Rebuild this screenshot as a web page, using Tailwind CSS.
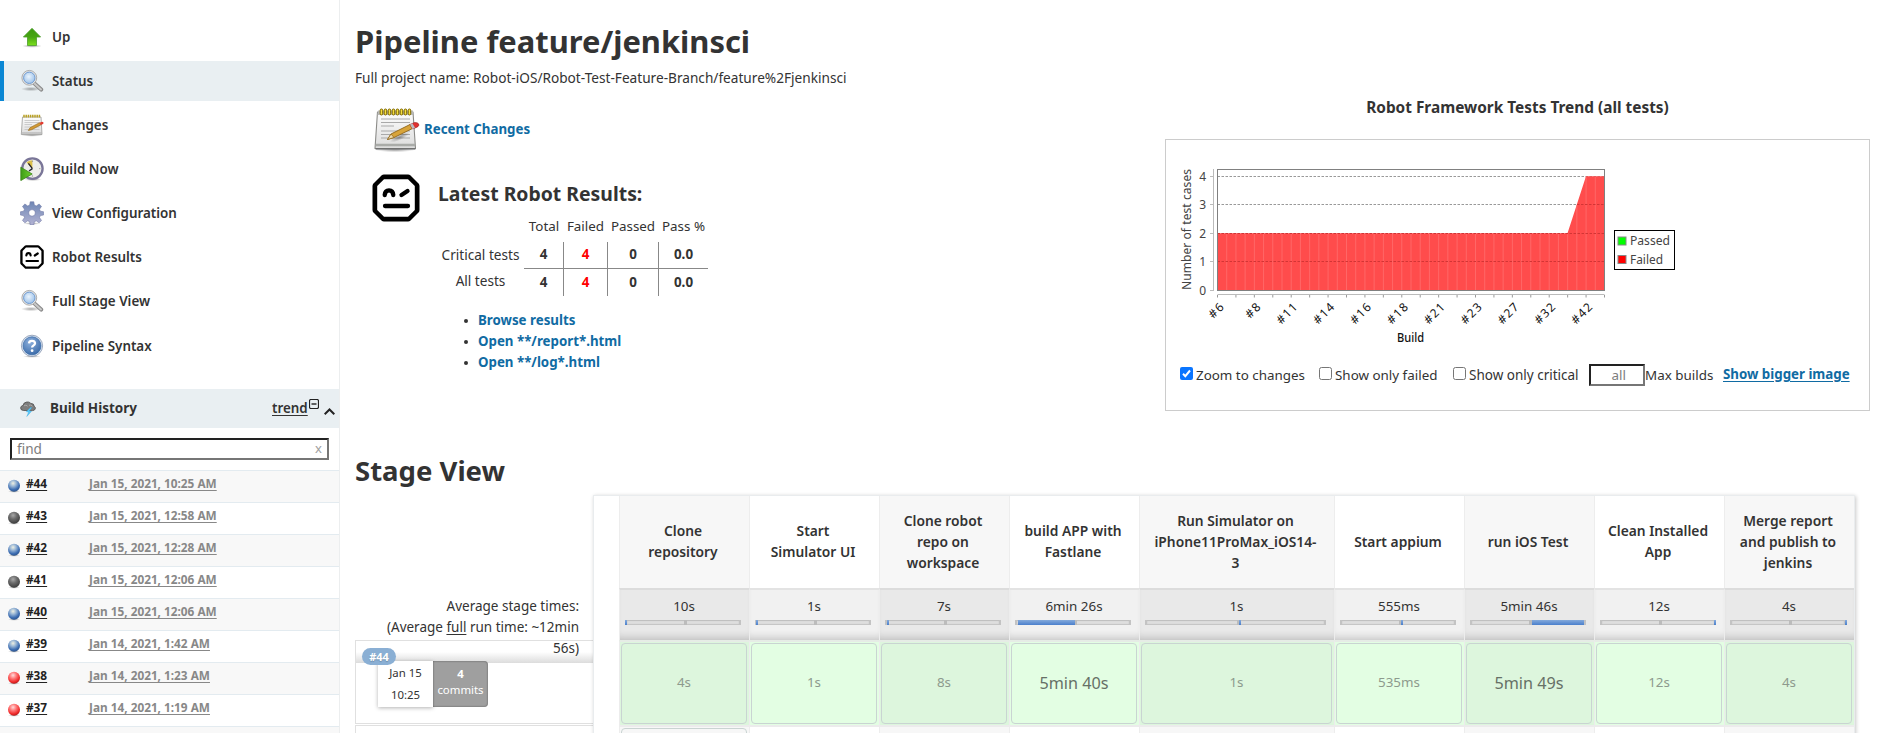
<!DOCTYPE html>
<html lang="en">
<head>
<meta charset="utf-8">
<title>Pipeline feature/jenkinsci</title>
<script src="https://cdn.jsdelivr.net/npm/@tailwindcss/browser@4"></script>
</head>
<body class="bg-white">
<svg class="absolute size-0">
  <defs>
    <linearGradient id="gUp" x1="0" y1="0" x2="0" y2="1"><stop offset="0" stop-color="#3c9a10"/><stop offset=".5" stop-color="#47a512"/><stop offset="1" stop-color="#7be01c"/></linearGradient>
    <linearGradient id="gPaper" x1="0" y1="0" x2="0" y2="1"><stop offset="0" stop-color="#fdfdfd"/><stop offset="1" stop-color="#dcdcdc"/></linearGradient>
    <radialGradient id="gLens" cx=".45" cy=".4" r=".6"><stop offset="0" stop-color="#eaf4fd"/><stop offset="1" stop-color="#9fc3ea"/></radialGradient>
    <linearGradient id="gPlay" x1="0" y1="0" x2="1" y2="0"><stop offset="0" stop-color="#3f9d18"/><stop offset="1" stop-color="#6fd02c"/></linearGradient>
    <linearGradient id="gGear" x1="0" y1="0" x2="0" y2="1"><stop offset="0" stop-color="#6f87b5"/><stop offset="1" stop-color="#b3b3d3"/></linearGradient>
    <radialGradient id="gHelp" cx=".4" cy=".3" r=".8"><stop offset="0" stop-color="#8db0dd"/><stop offset="1" stop-color="#3465a4"/></radialGradient>
    <radialGradient id="gBlue" cx=".42" cy=".3" r=".7"><stop offset="0" stop-color="#eef0e2"/><stop offset=".35" stop-color="#9cb8d6"/><stop offset=".75" stop-color="#3f6fb3"/><stop offset="1" stop-color="#2c5590"/></radialGradient>
    <radialGradient id="gGrey" cx=".42" cy=".3" r=".7"><stop offset="0" stop-color="#a8a8a8"/><stop offset=".45" stop-color="#6c6c6c"/><stop offset="1" stop-color="#3c3c3c"/></radialGradient>
    <radialGradient id="gRed" cx=".42" cy=".3" r=".7"><stop offset="0" stop-color="#ffdcdc"/><stop offset=".4" stop-color="#ff7878"/><stop offset=".8" stop-color="#ef2929"/><stop offset="1" stop-color="#b81c1c"/></radialGradient>
    <radialGradient id="gShade"><stop offset="0" stop-color="#000" stop-opacity=".35"/><stop offset="1" stop-color="#000" stop-opacity="0"/></radialGradient>
    <symbol id="i-up" viewBox="0 0 24 24"><ellipse cx="12" cy="21" rx="10" ry="1.8" fill="url(#gShade)"/><path d="M12 3.3 20.6 12H16.5V20.5H7.5V12H3.4Z" fill="url(#gUp)" stroke="#4d9c2c" stroke-width=".8" stroke-linejoin="round"/></symbol>
    <symbol id="i-search" viewBox="0 0 24 24"><ellipse cx="11" cy="20" rx="10" ry="2.2" fill="url(#gShade)"/><path d="M14.2 14.2 21.2 20.6" stroke="#8b8b8b" stroke-width="4" stroke-linecap="round"/><path d="M14.2 14.2 21 20.4" stroke="#c9c9c9" stroke-width="2" stroke-linecap="round"/><circle cx="9.3" cy="8.8" r="7.4" fill="#e6e6e6" stroke="#a6a6a6" stroke-width=".9"/><circle cx="9.3" cy="8.8" r="5.7" fill="url(#gLens)" stroke="#6f9bd1" stroke-width="1"/></symbol>
    <symbol id="i-note" viewBox="0 0 48 48"><ellipse cx="23" cy="45" rx="20" ry="2.2" fill="url(#gShade)"/><path d="M5.5 7H41L43.5 43.5H3Z" fill="url(#gPaper)" stroke="#8b8b88" stroke-width="1.1" stroke-linejoin="round"/><path d="M6 5.5H41V10H5.6Z" fill="#b9b9b6"/><path d="M4 40H43" stroke="#a9aba8" stroke-width="2.6"/><path d="M3.6 44H43.4" stroke="#55575a" stroke-width="1"/><path d="M9 14H38M9 17.5H38M9 21H22M9 26H38M9 29.5H38M9 33H38" stroke="#a9a9a9" stroke-width="1"/><g fill="#f4dd3c" stroke="#7b6500" stroke-width="1"><rect x="8.2" y="4" width="2.5" height="6" rx="1.2"/><rect x="12.2" y="4" width="2.5" height="6" rx="1.2"/><rect x="16.2" y="4" width="2.5" height="6" rx="1.2"/><rect x="20.2" y="4" width="2.5" height="6" rx="1.2"/><rect x="24.2" y="4" width="2.5" height="6" rx="1.2"/><rect x="28.2" y="4" width="2.5" height="6" rx="1.2"/><rect x="32.2" y="4" width="2.5" height="6" rx="1.2"/><rect x="36.2" y="4" width="2.5" height="6" rx="1.2"/></g><ellipse cx="28" cy="32" rx="11" ry="3" fill="url(#gShade)" transform="rotate(-25 28 32)"/><path d="M15.500 34.500 19 29 38 19.500 40.500 23.500 22 32.500Z" fill="#d8a43a" stroke="#8f6418" stroke-width=".9" stroke-linejoin="round"/><path d="M15.500 34.500 19 29 22 32.500Z" fill="#ecd9ac" stroke="#8f6418" stroke-width=".7"/><path d="M38 19.500 42.500 17.500Q46.500 17 47 20 46.500 21.500 45 22.200L40.500 24Z" fill="#e03030" stroke="#9a2020" stroke-width=".6"/><path d="M38 19.500 40.500 18.400 43 22.800 40.500 24Z" fill="#b9bbc0"/></symbol>
    <symbol id="i-notes" viewBox="0 0 24 24"><ellipse cx="12" cy="22.3" rx="11" ry="1.4" fill="url(#gShade)"/><path d="M2.5 4H21L22 21.5H1.3Z" fill="url(#gPaper)" stroke="#9a9a98" stroke-width=".8" stroke-linejoin="round"/><path d="M1.5 20H22" stroke="#b4b4b4" stroke-width="1.2"/><path d="M4.5 7.5H19.5M4.5 9.5H19.5M4.5 11.5H12M4.5 14H19.5M4.5 16.5H19.5" stroke="#c2c2c2" stroke-width=".8"/><path d="M4 1.8V4.6M6.2 1.8V4.6M8.4 1.8V4.6M10.6 1.8V4.6M12.8 1.8V4.6M15 1.8V4.6M17.2 1.8V4.6M19.4 1.8V4.6" stroke="#b9a021" stroke-width="1.5"/><path d="M8.3 17.5 10 14.7 19.5 9.7 21 11.8 11.7 16.7Z" fill="#d39a35" stroke="#8f6418" stroke-width=".6"/><path d="M19.5 9.7 22 8.8Q24 9 23.4 10.8L21 12Z" fill="#e23a30"/></symbol>
    <symbol id="i-clock" viewBox="0 0 24 24"><ellipse cx="13" cy="22.6" rx="9" ry="1.4" fill="url(#gShade)"/><circle cx="12.4" cy="11.6" r="10.2" fill="#ededea" stroke="#7a7698" stroke-width="2.3"/><path d="M12.4 11.6 6.5 5.5Q9 3.2 12.4 3.2Z" fill="#dcc04a"/><path d="M12.4 11.6 8.4 6.3M12.4 11.6 9 14" stroke="#22222c" stroke-width="1.3"/><circle cx="12.4" cy="4.2" r=".7" fill="#999"/><circle cx="19.8" cy="11.6" r=".7" fill="#999"/><circle cx="12.4" cy="19" r=".7" fill="#999"/><path d="M.8 10.2 12.2 17 .8 23.6Z" fill="url(#gPlay)" stroke="#3a8518" stroke-width=".8" stroke-linejoin="round"/></symbol>
    <symbol id="i-gear" viewBox="0 0 24 24"><ellipse cx="12" cy="22.5" rx="9" ry="1.4" fill="url(#gShade)"/><g fill="url(#gGear)" stroke="#7079a6" stroke-width=".6"><path fill-rule="evenodd" d="M10.2.8h3.600l.5 3.3 2 .9 2.800-2 2.400 2.400-2 2.800.8 2 3.300.6v3.200l-3.300.6-.8 2 2 2.800-2.400 2.400-2.800-2-2 .9-.5 3.200h-3.600l-.5-3.200-2-.9-2.800 2-2.400-2.400 2-2.800-.9-2-3.200-.6v-3.200l3.200-.6.9-2-2-2.800L4.900 3l2.800 2 2-.9ZM12 8.600a3.300 3.300 0 1 0 .01 0Z"/></g></symbol>
    <symbol id="i-robot" viewBox="0 0 48 48"><path d="M12 .5H36Q37.500.5 38.500 1.500L46.500 9.500Q47.500 10.500 47.500 12V36Q47.500 37.500 46.500 38.500L38.500 46.500Q37.500 47.500 36 47.500H12Q10.500 47.500 9.500 46.500L1.500 38.500Q.5 37.500.5 36V12Q.5 10.500 1.500 9.500L9.500 1.500Q10.500.5 12 .5Z" fill="#000"/><path d="M12 5.200H36L42.800 12V36L36 42.800H12L5.200 36V12Z" fill="#fff"/><path d="M12.700 21Q13 16.300 17 16.300T21.300 21M29.500 21 35.500 17M13 32H36" fill="none" stroke="#000" stroke-width="4.300" stroke-linecap="round"/></symbol>
    <symbol id="i-help" viewBox="0 0 24 24"><ellipse cx="12" cy="22.500" rx="9" ry="1.300" fill="url(#gShade)"/><circle cx="12" cy="11.800" r="10.600" fill="#dce6f3" stroke="#8796ae" stroke-width=".800"/><circle cx="12" cy="11.800" r="9" fill="url(#gHelp)" stroke="#3465a4" stroke-width=".700"/><path d="M9 9.300Q9.200 6.900 12 6.900T15 9.200Q15 10.800 13.200 11.700 12.100 12.300 12.100 13.600" fill="none" stroke="#fff" stroke-width="2.300"/><circle cx="12.100" cy="16.700" r="1.400" fill="#fff"/></symbol>
    <symbol id="i-storm" viewBox="0 0 16 16"><path d="M3.500 9.500Q.500 9.300.600 6.800 1 4.700 3 4.400 3.600 1.300 6.800 1 9.300.500 10.800 2.400 14 2.300 14.200 5.200 15.700 6 15.300 7.800 14.600 9.700 12.500 9.600Z" fill="#7d7d7d" stroke="#4e4e4e" stroke-width=".800"/><path d="M4 4.800Q6 3.400 7.600 5.200M9 4.300Q11 3.200 12.400 5.300" stroke="#a9a9a9" stroke-width="1" fill="none"/><path d="M10.500 6.500 6.300 10.700 8.600 11 6.800 15.500 11.500 10.300 9.200 10 11.800 6.500Z" fill="#55c8fa" stroke="#3ba9e0" stroke-width=".400"/></symbol>
    <symbol id="i-ball" viewBox="0 0 14 14"><ellipse cx="7" cy="12.400" rx="6" ry="1.400" fill="url(#gShade)"/><circle cx="7" cy="6.700" r="6"/></symbol>
  </defs>
</svg>

<div class="flex h-[733px] w-[1878px] overflow-hidden bg-white font-['Noto_Sans',sans-serif] text-[13.6px] leading-[21px] text-[#333]">

  <aside class="flex w-[340px] shrink-0 flex-col border-r border-[#eceeef]">
    <nav class="flex h-[389px] shrink-0 flex-col gap-1 pt-[17px] text-[13.4px] font-semibold">
      <a class="flex h-10 items-center pl-5"><svg class="mr-[8px] size-6"><use href="#i-up"/></svg>Up</a>
      <a class="flex h-10 items-center border-l-4 border-[#0b87d4] bg-[#e9eff2] pl-4"><svg class="mr-[8px] size-6"><use href="#i-search"/></svg>Status</a>
      <a class="flex h-10 items-center pl-5"><svg class="mr-[8px] size-6"><use href="#i-notes"/></svg>Changes</a>
      <a class="flex h-10 items-center pl-5"><svg class="mr-[8px] size-6"><use href="#i-clock"/></svg>Build Now</a>
      <a class="flex h-10 items-center pl-5"><svg class="mr-[8px] size-6"><use href="#i-gear"/></svg>View Configuration</a>
      <a class="flex h-10 items-center pl-5"><svg class="mr-[8px] size-6"><use href="#i-robot"/></svg>Robot Results</a>
      <a class="flex h-10 items-center pl-5"><svg class="mr-[8px] size-6"><use href="#i-search"/></svg>Full Stage View</a>
      <a class="mt-px flex h-10 items-center pl-5"><svg class="mr-[8px] size-6"><use href="#i-help"/></svg>Pipeline Syntax</a>
    </nav>
    <div class="flex h-[39px] shrink-0 items-center bg-[#e9eff2] pl-5 text-[13.5px] font-bold">
      <svg class="mr-[14px] size-4"><use href="#i-storm"/></svg>
      <span class="w-[222px]">Build History</span>
      <span class="w-[37px] text-[13.4px] font-semibold underline decoration-1 underline-offset-2">trend</span>
      <svg class="mb-[10px] size-[10px]" viewBox="0 0 10 10" fill="none" stroke="#222"><rect x=".5" y=".5" width="9" height="9" rx="1.500" stroke-width="1.200"/><path d="M2.500 5H7.500" stroke-width="1.400"/></svg>
      <svg class="mt-[5px] ml-[5px] h-[7px] w-[11px]" viewBox="0 0 11 7" fill="none" stroke="#222" stroke-width="2"><path d="M.7 6.200 5.500 1.500 10.300 6.200"/></svg>
    </div>
    <div class="h-[42px] shrink-0 px-[10px] pt-[10px]">
      <div class="flex h-[22px] w-[319px] items-center justify-between border-2 border-t-[#222] border-r-[#767676] border-b-[#767676] border-l-[#222] pr-[5px] pb-px pl-[5px] text-[#7d7d7d]"><span>find</span><span class="text-[13px] text-[#a0a0a0]">x</span></div>
    </div>
    <div id="builds"></div>
  </aside>

  <main class="flex flex-col pl-[15px]">
    <div class="flex h-[441px] shrink-0">
      <section class="w-[810px]">
        <h1 class="pt-[20px] text-[30.9px] leading-[42px] font-bold">Pipeline feature/jenkinsci</h1>
        <p class="mt-[5px] text-[13.65px]">Full project name: Robot-iOS/Robot-Test-Feature-Branch/feature%2Fjenkinsci</p>
        <div class="mt-[17px] flex h-12 items-center pl-[17px] text-[13.3px] font-bold text-[#106ba3]"><svg class="mr-[4px] size-12"><use href="#i-note"/></svg>Recent Changes</div>
        <div class="mt-[21px] flex">
          <svg class="ml-[17px] size-[48px]"><use href="#i-robot"/></svg>
          <div class="ml-[18px]">
            <h2 class="mt-[7px] text-[19.4px] leading-[26px] font-bold">Latest Robot Results:</h2>
            <div class="mt-[9px] ml-px grid w-[269px] grid-cols-[85px_40px_44px_51px_49px] text-center text-[13.4px]">
              <span></span><span class="-mx-1 h-[26px]">Total</span><span class="-mx-1 pr-px">Failed</span><span class="-mx-1 pr-px">Passed</span><span class="-mx-1">Pass %</span>
              <span class="h-[27px] pt-[2px] pr-[2px] text-[13.6px]">Critical tests</span>
              <b class="border-r border-b border-[#888] pt-[2px]">4</b><b class="border-r border-b border-[#888] pt-[2px] text-[#f00]">4</b><b class="border-r border-b border-[#888] pt-[2px]">0</b><b class="border-b border-[#888] pt-[2px]">0.0</b>
              <span class="h-[27px] pt-[1px] pr-[2px] text-[13.6px]">All tests</span>
              <b class="border-r border-[#888] pt-[3px]">4</b><b class="border-r border-[#888] pt-[3px] text-[#f00]">4</b><b class="border-r border-[#888] pt-[3px]">0</b><b class="pt-[3px]">0.0</b>
            </div>
            <ul class="mt-[14px] ml-[38px] text-[13.3px] font-bold text-[#106ba3]">
              <li class="flex items-center before:mr-[10px] before:ml-[-12px] before:size-1 before:rounded-full before:bg-[#333]">Browse results</li>
              <li class="flex items-center before:mr-[10px] before:ml-[-12px] before:size-1 before:rounded-full before:bg-[#333]">Open **/report*.html</li>
              <li class="flex items-center before:mr-[10px] before:ml-[-12px] before:size-1 before:rounded-full before:bg-[#333]">Open **/log*.html</li>
            </ul>
          </div>
        </div>
      </section>

      <section class="w-[705px] pt-[97px]">
        <h3 class="text-center text-[15.4px] leading-[22px] font-bold">Robot Framework Tests Trend (all tests)</h3>
        <div class="mt-[20px] h-[272px] border border-[#ccc] pt-[20px] pl-[14px]">
          <svg class="h-[190px] w-[500px] overflow-visible" viewBox="1180 160 500 190" font-family="Noto Sans, sans-serif" font-size="12" fill="#444">
            <g id="grid"></g>
            <text transform="translate(1191 290) rotate(-90)" textLength="121">Number of test cases</text>
            <g font-size="12" text-anchor="end"><text x="1206" y="181">4</text><text x="1206" y="209">3</text><text x="1206" y="238">2</text><text x="1206" y="266">1</text><text x="1206" y="295">0</text></g>
            <text x="1410.500" y="342" text-anchor="middle" fill="#111" font-weight="500" textLength="27" lengthAdjust="spacingAndGlyphs">Build</text>
            <rect x="1614.500" y="230.500" width="60" height="39" fill="#fff" stroke="#000"/>
            <rect x="1618" y="237" width="8" height="8" fill="#0f0" stroke="#888"/><rect x="1618" y="255.500" width="8" height="8" fill="#f00" stroke="#888"/>
            <text x="1630" y="245" font-size="12.500" textLength="40" lengthAdjust="spacingAndGlyphs">Passed</text><text x="1630" y="264" font-size="12.500" textLength="33" lengthAdjust="spacingAndGlyphs">Failed</text>
          </svg>
          <div class="mt-[14px] flex h-[22px] items-center text-[13.4px]">
            <label class="flex w-[139px] items-center"><svg class="mr-[3px] mb-[3px] size-[13px]" viewBox="0 0 13 13"><rect width="13" height="13" rx="2" fill="#0a75ff"/><path d="M3 6.800 5.300 9.200 10 3.500" fill="none" stroke="#fff" stroke-width="2"/></svg>Zoom to changes</label>
            <label class="flex w-[134px] items-center"><span class="mr-[3px] mb-[3px] size-[13px] rounded-[2.5px] border border-[#767676]"></span>Show only failed</label>
            <label class="flex w-[136px] items-center text-[13.5px]"><span class="mr-[3px] mb-[3px] size-[13px] rounded-[2.5px] border border-[#767676]"></span>Show only critical</label>
            <span class="flex h-[22px] w-[56px] items-center justify-end border-2 border-t-[#222] border-r-[#767676] border-b-[#767676] border-l-[#222] pr-[17px] text-[#7d7d7d]">all</span>
            <span class="w-[78px]">Max builds</span>
            <a class="-mt-px text-[13.3px] font-bold whitespace-nowrap text-[#106ba3] underline underline-offset-2">Show bigger image</a>
          </div>
        </div>
      </section>
    </div>

    <h2 class="h-[54px] shrink-0 pt-[10px] text-[27.5px] leading-[40px] font-bold">Stage View</h2>
    <div class="flex">
      <div class="w-[238px]">
        <div class="relative z-10 h-[145px] pt-[101px] pr-[14px] text-right text-[13.5px]">Average stage times:<br>(Average <u class="underline-offset-2">full</u> run time: ~12min<br>56s)</div>
        <div class="h-[84px] border border-r-0 border-[#e0e0e0]">
          <div class="h-[22px] bg-linear-to-b from-white from-50% to-[#dcdcdc] pt-[7px] pl-[6px]">
            <span class="relative z-20 flex h-[17px] w-[34px] items-center justify-center rounded-full bg-[#8aafd4] text-[11px] leading-none font-bold text-white text-shadow-xs">#44</span>
          </div>
          <div class="relative z-10 -mt-[2px] ml-[22px] flex h-[46px] w-[110px] text-center text-[11.4px]">
            <div class="w-[55px] bg-white pt-px leading-[22px] shadow-[0_1px_4px_rgba(0,0,0,0.3)]">Jan 15<br>10:25</div>
            <div class="w-[55px] rounded-r-[4px] bg-[#9f9f9f] pt-[5px] leading-4 text-white shadow-[inset_0_0_2px_rgba(0,0,0,0.5)]"><b>4</b><br>commits</div>
          </div>
        </div>
        <div class="mt-px h-[20px] border border-r-0 border-[#e0e0e0]"></div>
      </div>
      <div class="h-[260px] w-[1262px] border border-[#e9ecee] bg-white pl-[25px] shadow-[1px_1px_4px_rgba(0,0,0,0.22)]">
        <div id="stages" class="grid grid-cols-[130px_130px_130px_130px_195px_130px_130px_130px_130px] text-center"></div>
      </div>
    </div>
  </main>
</div>

<script>
const builds = [
  ['#44', 'Jan 15, 2021, 10:25 AM', 'gBlue'], ['#43', 'Jan 15, 2021, 12:58 AM', 'gGrey'],
  ['#42', 'Jan 15, 2021, 12:28 AM', 'gBlue'], ['#41', 'Jan 15, 2021, 12:06 AM', 'gGrey'],
  ['#40', 'Jan 15, 2021, 12:06 AM', 'gBlue'], ['#39', 'Jan 14, 2021, 1:42 AM', 'gBlue'],
  ['#38', 'Jan 14, 2021, 1:23 AM', 'gRed'], ['#37', 'Jan 14, 2021, 1:19 AM', 'gRed'], ['', '', '']
];
document.getElementById('builds').innerHTML = builds.map(([id, date, ball]) =>
  `<div class="flex h-8 items-center border-t border-[#e3ebf0] pb-[7px] pl-[7px] text-[11.8px] leading-5 font-bold odd:bg-[#f8f8f8]">` +
  (id ? `<svg class="mt-[6px] mr-[5px] size-[14px]" fill="url(#${ball})"><use href="#i-ball"/></svg>
   <span class="w-[63px] text-[#222] underline decoration-1 underline-offset-[2px]">${id}</span>
   <span class="text-[#888] underline decoration-1 underline-offset-[2px]">${date}</span>` : '') + `</div>`).join('');

// name, average, last run, fill start, fill width, middle tick, emphasised
const stages = [
  ['Clone<br>repository', '10s', '4s', 0, 1.5, 60], ['Start<br>Simulator UI', '1s', '1s', 1, 1.5, 60],
  ['Clone robot<br>repo on<br>workspace', '7s', '8s', 2, 1.5, 60], ['build APP with<br>Fastlane', '6min 26s', '5min 40s', 3, 57, 60, 1],
  ['Run Simulator on<br>iPhone11ProMax_iOS14-<br>3', '1s', '1s', 94, 1.5, 93], ['Start appium', '555ms', '535ms', 61, 1.5, 60],
  ['run iOS Test', '5min 46s', '5min 49s', 62, 52, 60, 1], ['Clean Installed<br>App', '12s', '12s', 114, 1.5, 60],
  ['Merge report<br>and publish to<br>jenkins', '4s', '4s', 115, 1.5, 60]
];
const odd = i => i % 2 === 0;
document.getElementById('stages').innerHTML =
  stages.map((s, i) => `<div class="flex h-[92px] items-center justify-center border-l border-[#ededed] pr-[3px] pb-[2px] text-[13.8px] font-semibold whitespace-nowrap ${odd(i) ? 'bg-[#f7f7f7]' : 'bg-white'}">${s[0]}</div>`).join('') +
  stages.map((s, i) => `<div class="h-[52px] border-t-2 border-l border-l-[#ededed] pt-[6px] pl-[5px] text-[13.4px] shadow-[inset_0_-8px_8px_-6px_rgba(0,0,0,0.2)] ${odd(i) ? 'border-t-[#dcdcdc] bg-[#e9e9e9]' : 'border-t-[#e3e3e3] bg-[#f1f1f1]'}"><div class="pr-[6px]">${s[1]}</div>
    <div class="relative mt-[3px] mr-[8px] h-[5px] border-x-2 border-[#c3c3c3] bg-[#dedede] shadow-[inset_0_1px_1px_#bdbdbd,inset_0_-1px_1px_#c4c4c4]">
      <span class="absolute inset-y-0 w-[3px] bg-[#bcbcbc]" style="left:${s[5] - 3}px"></span>
      <span class="absolute inset-y-0 bg-linear-to-b from-[#84aadb] to-[#4a7fcc]" style="left:${s[3] - 2}px;width:${s[4]}px"></span>
    </div></div>`).join('') +
  stages.map((s, i) => `<div class="h-[87px] border-y-2 border-l border-[#ececec] border-t-[#e6ece6] pr-[2px] pl-px ${odd(i) ? 'bg-[#ddf6dd]' : 'bg-[#e3fee3]'}"><div class="mt-px flex h-[81px] items-center justify-center rounded-[4px] border border-[#c9d4d2] ${s[6] ? 'text-[16.2px] text-[#667066]' : 'pb-[2px] text-[13.4px] text-[#8d9a8d]'}">${s[2]}</div></div>`).join('') +
  stages.map((s, i) => `<div class="h-[28px] border-l border-[#ededed] pt-px pr-[2px] pl-px ${odd(i) ? 'bg-[#f7f7f7]' : 'bg-white'}">${i ? '' : '<div class="h-[60px] rounded-[4px] border border-[#c9d4d2]"></div>'}</div>`).join('');

const x0 = 1217.5, x1 = 1604.5, tick = (x1 - x0) / 21;
let g = '';
for (const y of [176.5, 204.5, 233.5, 261.5]) g += `<path d="M${x0} ${y}H${x1}" stroke="#999" stroke-dasharray="2.500 1.500"/><path d="M1210 ${y}H1213" stroke="#bbb"/>`;
g += `<path d="M${x0} 290V233.300H1567.500L1586 176.300H${x1}V290Z" fill="#ff4c4c"/>`;
for (let i = 1; i < 42; i++) { const x = x0 + i * tick / 2; g += `<path d="M${x} ${i > 39 ? 177 : i === 39 ? 205 : 234}V290" stroke="#ff7474" stroke-opacity=".700"/>`; }
g += `<path d="M${x0} 261.500H${x1}M${x0} 233.500H${x1}M1577 204.500H${x1}" stroke="#d23535" stroke-dasharray="2.500 1.500"/>`;
g += `<rect x="${x0}" y="169.500" width="${x1 - x0}" height="121" fill="none" stroke="#808080"/>`;
g += `<path d="M1213.500 169V291M1210 290.500H1213M${x0} 294.500H${x1}" stroke="#bbb" fill="none"/>`;
for (let i = 0; i < 22; i++) g += `<path d="M${x0 + i * tick} 295V297.500" stroke="#999"/>`;
['#6', '#8', '#11', '#14', '#16', '#18', '#21', '#23', '#27', '#32', '#42'].forEach((t, i) => {
  g += `<text transform="translate(${x0 + i * 2 * tick + 7} 308) rotate(-45)" text-anchor="end" fill="#111" font-size="12" textLength="${t.length > 2 ? 24 : 16}">${t}</text>`;
});
document.getElementById('grid').innerHTML = g;
</script>
</body>
</html>
